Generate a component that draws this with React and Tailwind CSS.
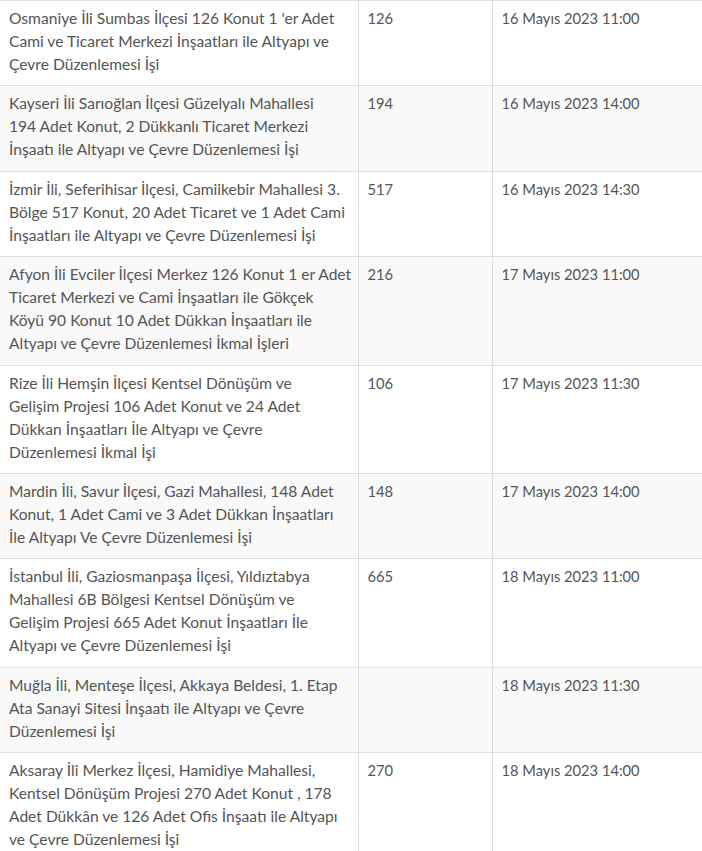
const rows = [
  [['Osmaniye İli Sumbas İlçesi 126 Konut 1 \'er Adet', 'Cami ve Ticaret Merkezi İnşaatları ile Altyapı ve', 'Çevre Düzenlemesi İşi'], '126', '16 Mayıs 2023 11:00'],
  [['Kayseri İli Sarıoğlan İlçesi Güzelyalı Mahallesi', '194 Adet Konut, 2 Dükkanlı Ticaret Merkezi', 'İnşaatı ile Altyapı ve Çevre Düzenlemesi İşi'], '194', '16 Mayıs 2023 14:00'],
  [['İzmir İli, Seferihisar İlçesi, Camiikebir Mahallesi 3.', 'Bölge 517 Konut, 20 Adet Ticaret ve 1 Adet Cami', 'İnşaatları ile Altyapı ve Çevre Düzenlemesi İşi'], '517', '16 Mayıs 2023 14:30'],
  [['Afyon İli Evciler İlçesi Merkez 126 Konut 1 er Adet', 'Ticaret Merkezi ve Cami İnşaatları ile Gökçek', 'Köyü 90 Konut 10 Adet Dükkan İnşaatları ile', 'Altyapı ve Çevre Düzenlemesi İkmal İşleri'], '216', '17 Mayıs 2023 11:00'],
  [['Rize İli Hemşin İlçesi Kentsel Dönüşüm ve', 'Gelişim Projesi 106 Adet Konut ve 24 Adet', 'Dükkan İnşaatları İle Altyapı ve Çevre', 'Düzenlemesi İkmal İşi'], '106', '17 Mayıs 2023 11:30'],
  [['Mardin İli, Savur İlçesi, Gazi Mahallesi, 148 Adet', 'Konut, 1 Adet Cami ve 3 Adet Dükkan İnşaatları', 'İle Altyapı Ve Çevre Düzenlemesi İşi'], '148', '17 Mayıs 2023 14:00'],
  [['İstanbul İli, Gaziosmanpaşa İlçesi, Yıldıztabya', 'Mahallesi 6B Bölgesi Kentsel Dönüşüm ve', 'Gelişim Projesi 665 Adet Konut İnşaatları İle', 'Altyapı ve Çevre Düzenlemesi İşi'], '665', '18 Mayıs 2023 11:00'],
  [['Muğla İli, Menteşe İlçesi, Akkaya Beldesi, 1. Etap', 'Ata Sanayi Sitesi İnşaatı ile Altyapı ve Çevre', 'Düzenlemesi İşi'], '', '18 Mayıs 2023 11:30'],
  [['Aksaray İli Merkez İlçesi, Hamidiye Mahallesi,', 'Kentsel Dönüşüm Projesi 270 Adet Konut , 178', 'Adet Dükkân ve 126 Adet Ofis İnşaatı ile Altyapı', 've Çevre Düzenlemesi İşi'], '270', '18 Mayıs 2023 14:00'],
]

export default function App() {
  return (
    <div className="w-[702px] bg-white font-['Lato','Open_Sans',sans-serif] leading-[23px] text-[#555]">
      <table className="w-full table-fixed border-collapse">
        <colgroup>
          <col className="w-[358px]" />
          <col className="w-[134px]" />
          <col />
        </colgroup>
        <tbody>
          {rows.map(([title, count, date], i) => (
            <tr key={i} className={i % 2 === 1 ? 'bg-[#f9f9f9]' : 'bg-white'}>
              <td className="align-top border-t border-[#ddd] px-[9px] pt-[6px] pb-[9.4px] text-[15.6px]">
                {title.map((line, k) => (
                  <span key={k} className="block whitespace-nowrap">{line}</span>
                ))}
              </td>
              <td className="align-top border-t border-l border-[#ddd] px-[9px] pt-[6px] pb-[9.4px] text-[14.7px]">
                {count}
              </td>
              <td className="align-top border-t border-l border-[#ddd] px-[9px] pt-[6px] pb-[9.4px] text-[14.7px]">
                {date}
              </td>
            </tr>
          ))}
        </tbody>
      </table>
    </div>
  )
}
